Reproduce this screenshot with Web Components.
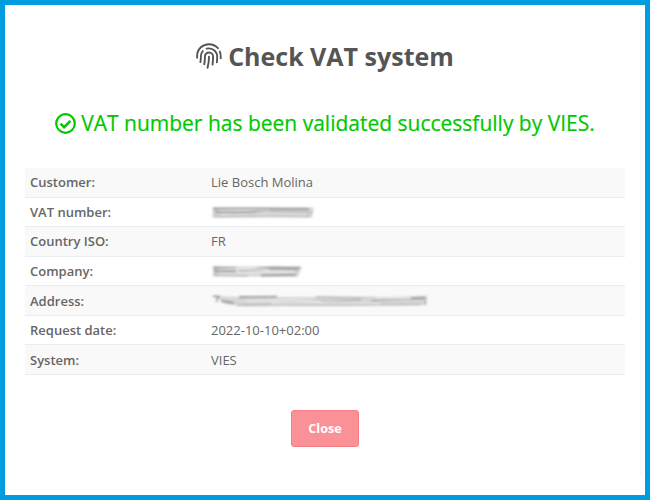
<!DOCTYPE html>
<html lang="en"><head><meta charset="utf-8"><title>Check VAT system</title>
<style>
html,body{margin:0;height:100%}
body{font-family:"Open Sans","Noto Sans",sans-serif;font-size:13px;line-height:1.42857;color:#666;overflow:hidden}
</style></head><body>
<vat-dialog>
  <dialog-title slot="title">Check VAT system</dialog-title>
  <status-message slot="status">VAT number has been validated successfully by VIES.</status-message>
  <data-row shaded label="Customer:">Lie Bosch Molina</data-row>
  <data-row label="VAT number:"><smudged-value kind="vat"></smudged-value></data-row>
  <data-row shaded label="Country ISO:">FR</data-row>
  <data-row label="Company:"><smudged-value kind="company"></smudged-value></data-row>
  <data-row shaded low label="Address:"><smudged-value kind="address"></smudged-value></data-row>
  <data-row label="Request date:">2022-10-10+02:00</data-row>
  <data-row shaded low label="System:">VIES</data-row>
  <close-button slot="action">Close</close-button>
</vat-dialog>
<script>
const define=(name,html,setup)=>customElements.define(name,class extends HTMLElement{
  connectedCallback(){
    if(this.shadowRoot)return;
    const root=this.attachShadow({mode:'open'});
    root.innerHTML=html;
    if(setup)setup(this,root);
  }
});
define('vat-dialog',`<style>
:host{display:flex;flex-direction:column;box-sizing:border-box;width:650px;height:500px;border:5px solid #009ce0;padding:34px 20px 0;background:#fff;position:relative}
.rows{margin-top:29px}
.action{display:flex;justify-content:center;margin-top:35px}
.track{position:absolute;right:3px;top:12px;width:2px;height:460px;background:#f9f9f9}
</style><slot name="title"></slot><slot name="status"></slot><div class="rows"><slot></slot></div><div class="action"><slot name="action"></slot></div><div class="track"></div>`);
define('dialog-title',`<style>
:host{display:flex;justify-content:center;align-items:center;gap:6px;height:34px;font-size:25px;line-height:34px;font-weight:700;color:#555}
svg{display:block}
</style><svg width="26" height="26" viewBox="0 0 512 512" fill="none" stroke="#555" stroke-width="37" stroke-linecap="round">
<path d="M256 268c1.200 75-9 145-28.500 220"/>
<path d="M162 418c10-48 15-104 14-153-.6-41 32-77 79-77 44 .5 81 36 81.500 79.500.8 49-3 99-11 156"/>
<path d="M133 158c-25 29-37 65-36.500 102 .6 39-2.600 78-9.500 117"/>
<path d="M208 110c15-4 31-5.500 47-5.300 88 1.300 161 72 162 158 .6 39-1.300 79-6 118"/>
<path d="M22 292v-38C22 122 128 24 254 24c70 0 134 28 178 78"/>
<path d="M470 168c14 38 19 75 18 132"/></svg><span><slot></slot></span>`);
define('status-message',`<style>
:host{display:flex;justify-content:center;align-items:center;gap:5px;margin-top:34px;height:32px;font-size:21px;line-height:32px;color:#00c800;white-space:nowrap;-webkit-text-stroke:.2px #00c800}
svg{display:block}
</style><svg width="21" height="21" viewBox="0 0 21 21" fill="none" stroke="#00c800"><circle cx="10.500" cy="10.500" r="9.300" stroke-width="2.200"/><path d="M5.500 10.600l3.600 3.600 6.300-6.300" stroke-width="2.500"/></svg><span><slot></slot></span>`);
define('data-row',`<style>
:host{display:grid;grid-template-columns:181px 1fr;box-sizing:border-box;height:29.570px;border-bottom:1px solid #e8eeef}
:host([shaded]){background:#f9f9f9}
.label,.value{padding:5px;line-height:18.570px}
:host([low]) .label,:host([low]) .value{padding-top:5.600px;padding-bottom:4.400px}
.label{font-weight:600}
</style><div class="label"></div><div class="value"><slot></slot></div>`,(host,root)=>{root.querySelector('.label').textContent=host.getAttribute('label')});
const smudges={
 vat:[103,'<path class="b" d="M2 4.500H103L101 14.500H1z"/><path d="M2 5.500H45L98 6M4 9l25 .5 28-1.500"/><path class="l" d="M3 13.500l34-.5 22-1 40 1.500M57 8.500l44 1"/><path class="w" d="M8 7.500l30-.5 20 .5M10 11.500l45-1 40 1"/>'],
 company:[92,'<path class="b" d="M2 4.500H91L87 14.500H2z"/><path d="M2 5.500l23 .3M3 9l22 .5M45 6.500l16-1 28 .5M50 13.500l35-.5"/><path class="l" d="M2 13l35 .8M28 9l33-2 26 1"/><path class="w" d="M8 7.500l28-1 22 1M8 11.500l38-1 37-1"/>'],
 address:[217,'<path class="b" d="M5 4l21 1H92L180 5 216 3.500V13H140L35 14.500 14 12z"/><path d="M2 4.500h6L5 10M10 9l13 2M28 5l38-.3M160 8.500l25-1.500 29-1"/><path class="l" d="M26 13l44-.5 55 .5 85-.5M70 8.500l50 1 42-2M105 5l60 1M214 5v8"/><path class="w" d="M35 9l45-1 30 2M60 11.500l58-1 52 1M150 7.500l50-1.500"/>']
};
define('smudged-value',`<style>
:host{display:block;height:18.570px}
svg{display:block}
g{filter:blur(.8px)}
path{fill:none;stroke:#888;stroke-width:1.300}
.b{fill:#d6d6d6;stroke:none}
.l{stroke:#b4b4b4}
.w{stroke:#ededed}
</style><svg height="18"><g></g></svg>`,(host,root)=>{const [w,p]=smudges[host.getAttribute('kind')];root.querySelector('svg').setAttribute('width',w+2);root.querySelector('g').innerHTML=p});
define('close-button',`<style>
:host{display:block}
button{display:block;box-sizing:border-box;width:68px;height:37px;padding:0;border:1px solid #f67f86;border-radius:3px;background:#f99197;color:#fff;font:700 12.700px/35px "Open Sans","Noto Sans",sans-serif}
</style><button><slot></slot></button>`);
</script></body></html>
